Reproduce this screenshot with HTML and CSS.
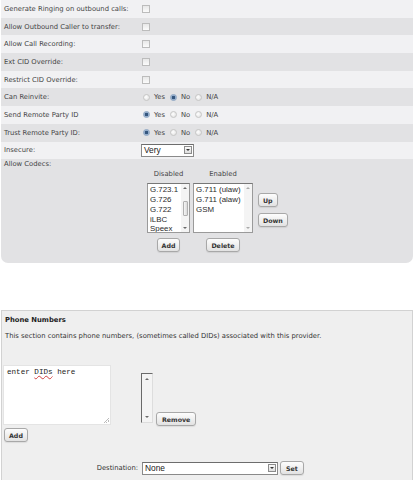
FILE: index.html
```html
<!DOCTYPE html>
<html lang="en">
<head>
    <meta charset="UTF-8">
    <meta name="viewport" content="width=device-width, initial-scale=1.0">
    <title>Trunk Settings</title>
    <link rel="stylesheet" href="styles.css">
</head>
<body>
    <div class="panel settings">
        <div class="row"><span class="label">Generate Ringing on outbound calls:</span><span class="value"><input type="checkbox"></span></div>
        <div class="row"><span class="label">Allow Outbound Caller to transfer:</span><span class="value"><input type="checkbox"></span></div>
        <div class="row"><span class="label">Allow Call Recording:</span><span class="value"><input type="checkbox"></span></div>
        <div class="row"><span class="label">Ext CID Override:</span><span class="value"><input type="checkbox"></span></div>
        <div class="row"><span class="label">Restrict CID Override:</span><span class="value"><input type="checkbox"></span></div>
        <div class="row"><span class="label">Can Reinvite:</span>
            <span class="value choices">
                <label><input type="radio" name="reinvite">Yes</label>
                <label><input type="radio" name="reinvite" checked>No</label>
                <label><input type="radio" name="reinvite">N/A</label>
            </span>
        </div>
        <div class="row"><span class="label">Send Remote Party ID</span>
            <span class="value choices">
                <label><input type="radio" name="sendrpid" checked>Yes</label>
                <label><input type="radio" name="sendrpid">No</label>
                <label><input type="radio" name="sendrpid">N/A</label>
            </span>
        </div>
        <div class="row"><span class="label">Trust Remote Party ID:</span>
            <span class="value choices">
                <label><input type="radio" name="trustrpid" checked>Yes</label>
                <label><input type="radio" name="trustrpid">No</label>
                <label><input type="radio" name="trustrpid">N/A</label>
            </span>
        </div>
        <div class="row"><span class="label">Insecure:</span>
            <span class="value">
                <span class="select insecure"><span class="current">Very</span><span class="drop"></span></span>
            </span>
        </div>
        <div class="codecs">
            <div class="label">Allow Codecs:</div>
            <div class="codec-grid">
                <div class="col-head">Disabled</div>
                <div class="col-head">Enabled</div>
                <div></div>

                <div class="listbox codec-off">
                    <div class="items">
                        <div>G.723.1</div>
                        <div>G.726</div>
                        <div>G.722</div>
                        <div>iLBC</div>
                        <div>Speex</div>
                    </div>
                    <div class="scroll"><i class="up"></i><i class="thumb"></i><i class="down"></i></div>
                </div>
                <div class="listbox codec-on">
                    <div class="items">
                        <div>G.711 (ulaw)</div>
                        <div>G.711 (alaw)</div>
                        <div>GSM</div>
                    </div>
                    <div class="scroll faded"><i class="up"></i><i class="down"></i></div>
                </div>
                <div class="order">
                    <button class="btn">Up</button>
                    <button class="btn">Down</button>
                </div>

                <div class="col-btn"><button class="btn">Add</button></div>
                <div class="col-btn"><button class="btn">Delete</button></div>
                <div></div>
            </div>
        </div>
    </div>

    <div class="panel numbers">
        <div class="title">Phone Numbers</div>
        <p class="note">This section contains phone numbers, (sometimes called DIDs) associated with this provider.</p>
        <div class="did-row">
            <div class="textarea">enter <span class="typo">DIDs</span> here<span class="grip"></span></div>
            <div class="listbox did-list">
                <div class="scroll"><i class="up"></i><i class="down"></i></div>
            </div>
            <button class="btn">Remove</button>
        </div>
        <button class="btn add-did">Add</button>
        <div class="dest-row">
            <span class="dest-label">Destination:</span>
            <span class="select dest"><span class="current">None</span><span class="drop"></span></span>
            <button class="btn">Set</button>
        </div>
    </div>
</body>
</html>
```

FILE: styles.css
```css
body {
    margin: 0;
    font-family: "DejaVu Sans", sans-serif;
    font-size: 6.8px;
    color: #444;
    background: #fff;
}
.panel {
    margin: 0 1px;
}
.settings {
    height: 263px;
    background: #e2e2e4;
    border-radius: 0 0 7px 7px;
}
.row {
    display: flex;
    align-items: center;
    height: 17.7px;
}
.row:nth-child(odd) {
    background: #f1f1f3;
}
.label {
    width: 140px;
    box-sizing: border-box;
    padding-left: 3px;
}
.value {
    display: flex;
    align-items: center;
}

/* checkboxes and radios */
input[type="checkbox"],
input[type="radio"] {
    appearance: none;
    margin: 0;
    width: 8px;
    height: 8px;
    box-sizing: border-box;
}
input[type="checkbox"] {
    margin-left: 1px;
    border: 1px solid #bcbcbc;
    background: linear-gradient(#e8e8e8, #fbfbfb);
}
input[type="radio"] {
    width: 7px;
    height: 7px;
    border: 1px solid #c6c6c6;
    border-radius: 50%;
    background: radial-gradient(circle at 40% 40%, #fff, #dcdcdc);
}
input[type="radio"]:checked {
    border-color: #8aa4c2;
    background: radial-gradient(circle, #34567e 0 1.4px, #8fa9c9 2px, #e4ecf5 3.5px);
}
.choices {
    padding-left: 2px;
}
.choices label {
    display: flex;
    align-items: center;
    gap: 4px;
    margin-right: 5px;
}

/* drop-down boxes */
.select {
    display: flex;
    align-items: center;
    justify-content: space-between;
    height: 13px;
    box-sizing: border-box;
    padding: 0 1px 0 2px;
    background: #fff;
    border: 1px solid #8a8a8a;
    border-top-color: #6d6d6d;
    font-family: "Liberation Sans", Arial, sans-serif;
    font-size: 8.4px;
    color: #222;
}
.insecure {
    width: 53px;
}
.drop {
    position: relative;
    width: 8px;
    height: 8px;
    box-sizing: border-box;
    border: 1px solid #8c8c8c;
    background: linear-gradient(#fafafa, #dedede);
}
.drop::after {
    content: "";
    position: absolute;
    left: 1px;
    top: 2px;
    border-left: 2px solid transparent;
    border-right: 2px solid transparent;
    border-top: 2px solid #333;
}

/* codec picker */
.codecs .label {
    padding-top: 1px;
    line-height: 9px;
}
.codec-grid {
    display: grid;
    grid-template-columns: 43px 60px auto;
    grid-template-rows: 14px 50px auto;
    column-gap: 3px;
    margin-left: 146px;
}
.col-head {
    text-align: center;
    line-height: 10px;
}
.listbox {
    display: flex;
    box-sizing: border-box;
    background: #fff;
    border: 1px solid #9a9a9a;
    border-top-color: #777;
}
.items {
    flex: 1;
    padding: 1px 0 0 2px;
    font-family: "Liberation Sans", Arial, sans-serif;
    font-size: 7.9px;
    line-height: 9.8px;
    color: #2a2a2a;
    white-space: nowrap;
    overflow: hidden;
}
.scroll {
    display: flex;
    flex-direction: column;
    align-items: center;
    justify-content: space-between;
    width: 8px;
    padding: 3px 0;
    box-sizing: border-box;
    background: #f4f4f4;
}
.scroll .up,
.scroll .down {
    width: 0;
    height: 0;
    border-left: 2px solid transparent;
    border-right: 2px solid transparent;
}
.scroll .up {
    border-bottom: 2px solid #6a6a6a;
}
.scroll .down {
    border-top: 2px solid #6a6a6a;
}
.scroll .thumb {
    width: 5px;
    height: 15px;
    box-sizing: border-box;
    border: 1px solid #b0b0b0;
    border-radius: 1px;
    background: linear-gradient(90deg, #f6f6f6, #dadada);
}
.faded .up,
.faded .down {
    border-top-color: #aaa;
    border-bottom-color: #aaa;
}
.order {
    display: flex;
    flex-direction: column;
    align-items: flex-start;
    gap: 6px;
    padding: 10px 0 0 2px;
}
.col-btn {
    display: flex;
    justify-content: center;
    padding-top: 5px;
}

/* buttons */
.btn {
    height: 14px;
    margin: 0;
    padding: 0 4px;
    font-family: "DejaVu Sans", sans-serif;
    font-size: 6.3px;
    font-weight: bold;
    color: #333;
    background: linear-gradient(#fdfdfd, #e2e2e2);
    border: 1px solid #a8a8a8;
    border-radius: 3px;
    box-shadow: 0 1px 1px rgba(0,0,0,0.08);
}

/* phone numbers section */
.numbers {
    margin-top: 47px;
    min-height: 190px;
    background: #efefef;
    border: 1px solid #d2d2d2;
    border-bottom: 0;
}
.title {
    padding: 4px 0 0 3px;
    font-weight: bold;
    line-height: 10px;
    color: #222;
}
.note {
    margin: 6px 0 0 3px;
    line-height: 10px;
    color: #333;
}
.did-row {
    display: flex;
    align-items: flex-end;
    margin-top: 24px;
}
.textarea {
    position: relative;
    width: 108px;
    height: 60px;
    margin-left: 1px;
    box-sizing: border-box;
    padding: 2px 3px;
    background: #fff;
    border: 1px solid #e4e4e4;
    font-family: "Liberation Mono", monospace;
    font-size: 7.6px;
    color: #222;
}
.typo {
    text-decoration: underline wavy #d04040;
    text-decoration-thickness: 0.6px;
}
.grip {
    position: absolute;
    right: 1px;
    bottom: 1px;
    width: 5px;
    height: 5px;
    background: linear-gradient(135deg, transparent 45%, #bbb 45% 55%, transparent 55% 70%, #bbb 70% 80%, transparent 80%);
}
.did-list {
    width: 12px;
    height: 50px;
    margin: 0 0 2px 30px;
    border-color: #6a6a6a #ddd #ddd #6a6a6a;
    background: #f4f4f4;
}
.did-list .scroll {
    width: 100%;
    padding: 4px 0;
}
.did-row .btn {
    margin: 0 0 -1px 3px;
    padding: 0 5px;
}
.add-did {
    margin: 3px 0 0 2px;
}
.dest-row {
    display: flex;
    align-items: center;
    margin-top: 19px;
}
.dest-label {
    width: 136px;
    text-align: right;
    color: #333;
}
.dest {
    width: 136px;
    margin: 0 1px 0 4px;
}
.dest-row .btn {
    margin-left: 1px;
    padding: 0 5px;
}
```
